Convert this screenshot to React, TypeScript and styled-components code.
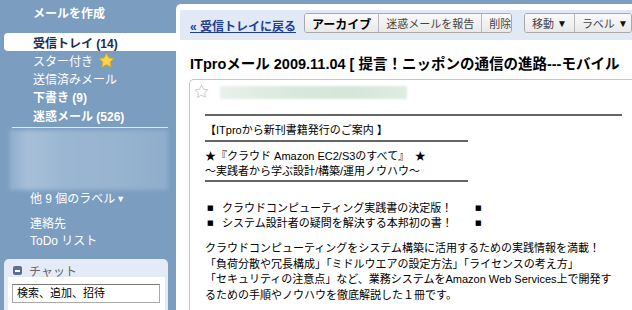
import React from "react";
import styled, { createGlobalStyle } from "styled-components";

const FONT = `"Liberation Sans", Arial, "Noto Sans CJK JP", sans-serif`;

const Global = createGlobalStyle`
  html, body { margin: 0; padding: 0; }
  body {
    background: #7a9dc0;
    font-family: ${FONT};
    width: 632px;
    height: 310px;
    overflow: hidden;
  }
  * { box-sizing: border-box; }
`;

const Page = styled.div`
  display: flex;
  width: 632px;
  height: 310px;
  overflow: hidden;
`;

/* ---------- Sidebar ---------- */
const Sidebar = styled.nav`
  width: 176px;
  flex: none;
  display: flex;
  flex-direction: column;
  color: #fff;
  font-size: 12px;
`;

const Compose = styled.div`
  height: 28px;
  line-height: 28px;
  padding-left: 33px;
  font-weight: bold;
`;

const NavList = styled.div`
  margin-top: 5px;
  display: flex;
  flex-direction: column;
`;

const NavItem = styled.div<{ $active?: boolean; $bold?: boolean }>`
  height: 18.25px;
  margin-left: 4px;
  padding-left: 29px;
  display: flex;
  align-items: center;
  gap: 5px;
  font-weight: ${(p) => (p.$bold || p.$active ? "bold" : "normal")};
  color: ${(p) => (p.$active ? "#1c2d55" : "#fff")};
  background: ${(p) => (p.$active ? "#fff" : "transparent")};
  border-radius: 4px 0 0 4px;
`;

const Divider = styled.div`
  height: 1px;
  background: #e8eef7;
  margin: 2.5px 8px 0 12px;
`;

const BlurBox = styled.div`
  height: 60px;
  margin: 2.5px 8px 0 9px;
  background: linear-gradient(
    90deg,
    #8eaccb 0%,
    #a7c0d8 12%,
    #9bb6d2 35%,
    #98b4d0 65%,
    #8faecc 100%
  );
  filter: blur(2px);
`;

const SideLink = styled.div<{ $gap?: number }>`
  height: 17px;
  line-height: 17px;
  padding-left: 30px;
  margin-top: ${(p) => p.$gap ?? 0}px;
  display: flex;
  align-items: center;
  gap: 1px;
`;

const SmallCaret = styled.span`
  font-size: 9px;
`;

const ChatBox = styled.div`
  margin: 9px 8px 0 4px;
  background: #e4ebf7;
  border-radius: 5px 5px 0 0;
  flex: 1;
  display: flex;
  flex-direction: column;
`;

const ChatHeader = styled.div`
  padding: 5px 0 0 9px;
  height: 18px;
  display: flex;
  align-items: center;
  gap: 7px;
  color: #666;
  font-size: 12px;
`;

const MinusIcon = styled.span`
  width: 9px;
  height: 9px;
  border-radius: 2px;
  background: #5c6f90;
  display: inline-flex;
  align-items: center;
  justify-content: center;
  &::after {
    content: "";
    width: 5px;
    height: 1.5px;
    background: #fff;
  }
`;

const ChatBody = styled.div`
  flex: 1;
  background: #fff;
  margin: 0 3px 0 4px;
  padding: 7px 5px 0 4px;
`;

const ChatInput = styled.div`
  height: 19px;
  border: 1px solid #aaa;
  border-top-color: #777;
  color: #000;
  font-size: 11px;
  line-height: 17px;
  padding-left: 4px;
`;

/* ---------- Main ---------- */
const Main = styled.main`
  flex: 1;
  min-width: 0;
  margin-top: 4px;
  background: #fff;
  border-top-left-radius: 5px;
  padding: 6px 0 0 4px;
  display: flex;
  flex-direction: column;
  overflow: hidden;
`;

const Toolbar = styled.div`
  height: 30px;
  background: #e1e9f6;
  padding-left: 10px;
  display: flex;
  align-items: center;
  border-top-left-radius: 2px;
`;

const BackLink = styled.a`
  color: #213f93;
  font-weight: bold;
  font-size: 12px;
  text-decoration: underline;
  white-space: nowrap;
  margin-right: 8px;
  margin-top: 1px;
`;

const ButtonGroup = styled.div<{ $gapLeft?: number }>`
  display: flex;
  align-self: flex-start;
  margin-top: 3px;
  margin-left: ${(p) => p.$gapLeft ?? 0}px;
  border: 1px solid #a9a9a9;
  border-radius: 3px;
  overflow: hidden;
`;

const Btn = styled.div<{ $strong?: boolean }>`
  height: 18px;
  padding: 0 7px;
  display: flex;
  align-items: center;
  gap: 3px;
  font-size: ${(p) => (p.$strong ? "12px" : "11px")};
  font-weight: ${(p) => (p.$strong ? "bold" : "normal")};
  color: ${(p) => (p.$strong ? "#000" : "#444")};
  background: linear-gradient(#fafafa, #e9e9e9);
  white-space: nowrap;
  & + & {
    border-left: 1px solid #b8b8b8;
  }
`;

const Caret = styled.span`
  font-size: 10px;
  color: #111;
`;

const Subject = styled.h1`
  margin: 0;
  height: 39px;
  padding: 5px 0 0 10px;
  display: flex;
  align-items: center;
  font-size: 14.5px;
  font-weight: bold;
  color: #000;
  white-space: nowrap;
`;

const Card = styled.div`
  flex: 1;
  margin-left: 9px;
  border: 1px solid #c6c6c6;
  border-right: 0;
  border-bottom: 0;
  border-top-left-radius: 5px;
  display: flex;
  flex-direction: column;
`;

const CardHeader = styled.div`
  display: flex;
  align-items: center;
  gap: 11px;
  padding: 4px 0 0 4px;
`;

const SenderBlur = styled.div`
  width: 187px;
  height: 13px;
  margin-top: 1px;
  background: linear-gradient(90deg, #e8f1ea, #d9e8dc 40%, #d6e6d9 70%, #dfece2);
  filter: blur(1px);
`;

const Body = styled.div`
  padding: 0 0 0 15px;
  font-size: 11px;
  line-height: 15px;
  color: #000;
  white-space: nowrap;
`;

const Rule = styled.div<{ $width?: number; $top: number }>`
  height: 2px;
  background: #656565;
  margin-top: ${(p) => p.$top}px;
  width: ${(p) => (p.$width ? `${p.$width}px` : "auto")};
  margin-right: ${(p) => (p.$width ? 0 : 10)}px;
`;

const Block = styled.div<{ $top: number; $lh?: number }>`
  margin-top: ${(p) => p.$top}px;
  line-height: ${(p) => p.$lh ?? 15}px;
`;

const BulletRow = styled.div`
  display: flex;
  align-items: center;
  height: 15px;
`;

const Square = styled.span<{ $w?: number }>`
  width: ${(p) => p.$w ?? 17}px;
  padding-left: 2px;
  font-family: "DejaVu Sans", sans-serif;
  font-size: 7px;
  flex: none;
`;

const BulletText = styled.span`
  width: 251px;
  flex: none;
`;

const Star = ({ size, fill, stroke }: { size: number; fill: string; stroke: string }) => (
  <svg width={size} height={size} viewBox="0 0 24 24">
    <path
      d="M12 1.8l3.1 6.6 7.1.9-5.2 4.9 1.4 7.1L12 17.8l-6.4 3.5 1.4-7.1L1.8 9.3l7.1-.9z"
      fill={fill}
      stroke={stroke}
      strokeWidth="1.4"
      strokeLinejoin="round"
    />
  </svg>
);

export default function App() {
  return (
    <>
      <Global />
      <Page>
        <Sidebar>
          <Compose>メールを作成</Compose>
          <NavList>
            <NavItem $active>受信トレイ (14)</NavItem>
            <NavItem>
              スター付き
              <Star size={17} fill="#f8d64a" stroke="#e2ac1c" />
            </NavItem>
            <NavItem>送信済みメール</NavItem>
            <NavItem $bold>下書き (9)</NavItem>
            <NavItem $bold>迷惑メール (526)</NavItem>
          </NavList>
          <Divider />
          <BlurBox />
          <SideLink $gap={1}>
            他 9 個のラベル<SmallCaret>▼</SmallCaret>
          </SideLink>
          <SideLink $gap={8}>連絡先</SideLink>
          <SideLink>ToDo リスト</SideLink>
          <ChatBox>
            <ChatHeader>
              <MinusIcon />
              チャット
            </ChatHeader>
            <ChatBody>
              <ChatInput>検索、追加、招待</ChatInput>
            </ChatBody>
          </ChatBox>
        </Sidebar>

        <Main>
          <Toolbar>
            <BackLink>« 受信トレイに戻る</BackLink>
            <ButtonGroup>
              <Btn $strong>アーカイブ</Btn>
              <Btn>迷惑メールを報告</Btn>
              <Btn>削除</Btn>
            </ButtonGroup>
            <ButtonGroup $gapLeft={12}>
              <Btn>
                移動<Caret>▼</Caret>
              </Btn>
              <Btn>
                ラベル<Caret>▼</Caret>
              </Btn>
            </ButtonGroup>
          </Toolbar>
          <Subject>ITproメール 2009.11.04 [ 提言！ニッポンの通信の進路---モバイル</Subject>
          <Card>
            <CardHeader>
              <Star size={15} fill="#fff" stroke="#c4c4c4" />
              <SenderBlur />
            </CardHeader>
            <Body>
              <Rule $top={15} />
              <Block $top={6.5}>【ITproから新刊書籍発行のご案内 】</Block>
              <Rule $top={2.5} $width={263} />
              <Block $top={6.5}>
                ★『クラウド Amazon EC2/S3のすべて』　★
                <br />
                ～実践者から学ぶ設計/構築/運用ノウハウ～
              </Block>
              <Rule $top={1.5} $width={263} />
              <Block $top={18.5}>
                <BulletRow>
                  <Square>■</Square>
                  <BulletText>クラウドコンピューティング実践書の決定版！</BulletText>
                  <Square>■</Square>
                </BulletRow>
                <BulletRow>
                  <Square>■</Square>
                  <BulletText>システム設計者の疑問を解決する本邦初の書！</BulletText>
                  <Square>■</Square>
                </BulletRow>
              </Block>
              <Block $top={10.75} $lh={15.5}>
                クラウドコンピューティングをシステム構築に活用するための実践情報を満載！
                <br />
                「負荷分散や冗長構成」「ミドルウエアの設定方法」「ライセンスの考え方」
                <br />
                「セキュリティの注意点」など、業務システムをAmazon Web Services上で開発す
                <br />
                るための手順やノウハウを徹底解説した１冊です。
              </Block>
            </Body>
          </Card>
        </Main>
      </Page>
    </>
  );
}
